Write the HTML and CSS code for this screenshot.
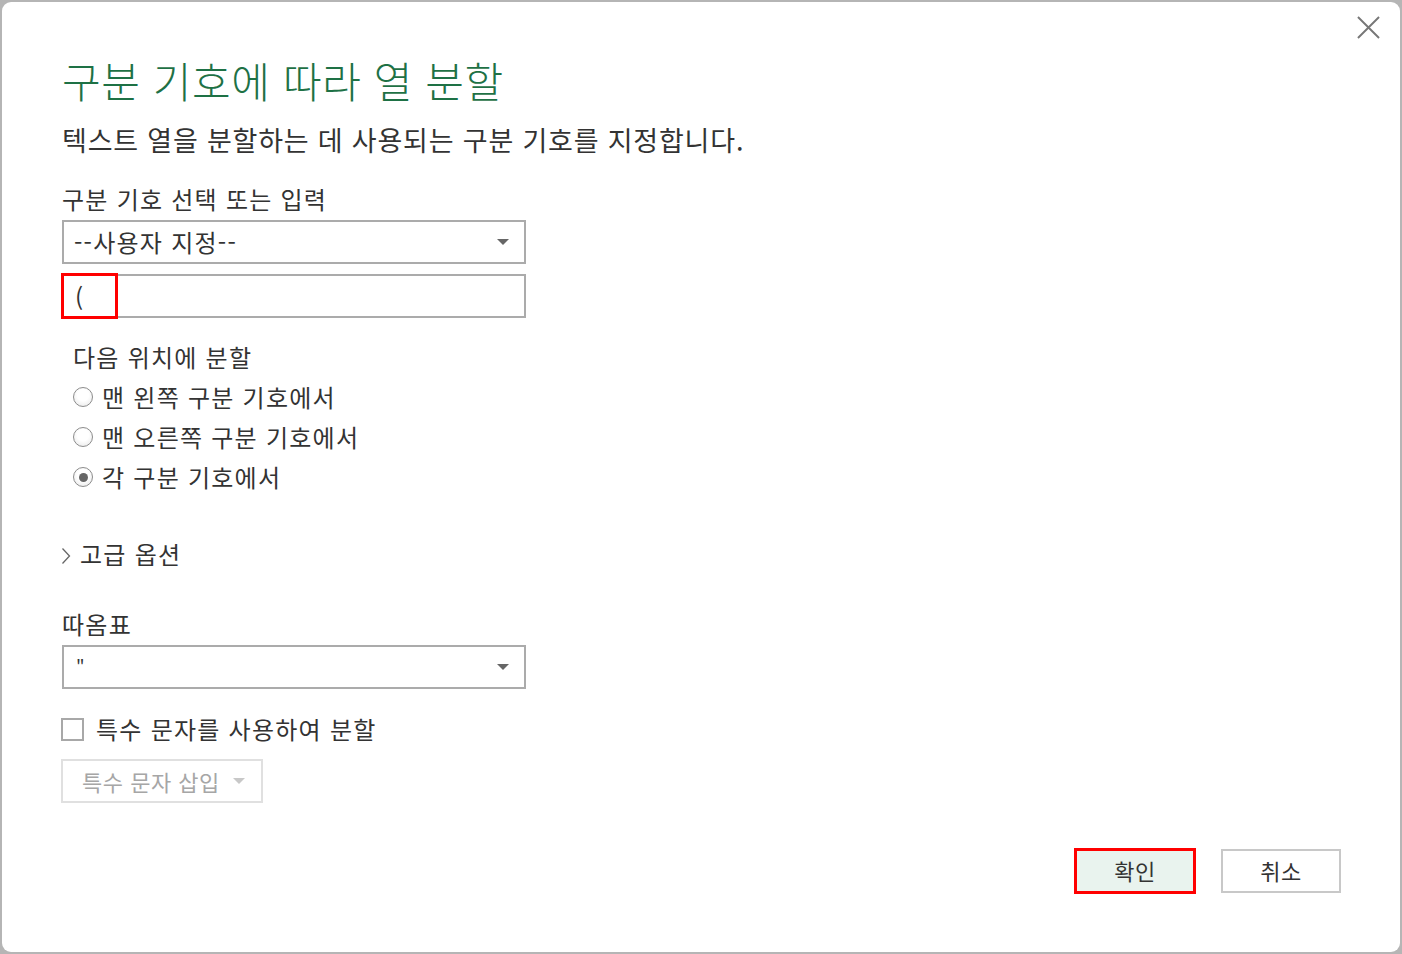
FILE: index.html
```html
<!DOCTYPE html>
<html lang="ko">
<head>
<meta charset="utf-8">
<title>구분 기호에 따라 열 분할</title>
<link rel="stylesheet" href="styles.css">
</head>
<body>
<div class="dialog">
  <button class="close" aria-label="닫기">
    <svg width="24" height="24" viewBox="0 0 24 24"><path d="M1 1 L23 23 M23 1 L1 23" stroke="#777" stroke-width="2" fill="none"/></svg>
  </button>
  <h1 class="title">구분 기호에 따라 열 분할</h1>
  <p class="subtitle">텍스트 열을 분할하는 데 사용되는 구분 기호를 지정합니다.</p>

  <div class="label first-label">구분 기호 선택 또는 입력</div>
  <div class="select">
    <span class="select-text">--사용자 지정--</span>
    <span class="arrow"></span>
  </div>
  <div class="input-wrap">
    <div class="input"><span class="input-text">(</span></div>
    <div class="highlight"></div>
  </div>

  <div class="radio-group">
    <div class="radio-heading">다음 위치에 분할</div>
    <div class="radio-row"><span class="radio"></span><span>맨 왼쪽 구분 기호에서</span></div>
    <div class="radio-row"><span class="radio"></span><span>맨 오른쪽 구분 기호에서</span></div>
    <div class="radio-row"><span class="radio checked"></span><span>각 구분 기호에서</span></div>
  </div>

  <div class="advanced">
    <svg class="chevron" width="10" height="18" viewBox="0 0 10 18"><path d="M1.5 1.5 L8.5 9 L1.5 16.5" stroke="#666" stroke-width="1.3" fill="none"/></svg>
    <span>고급 옵션</span>
  </div>

  <div class="label quote-label">따옴표</div>
  <div class="select">
    <span class="select-text quote">"</span>
    <span class="arrow"></span>
  </div>

  <div class="check-row">
    <span class="checkbox"></span>
    <span class="check-text">특수 문자를 사용하여 분할</span>
  </div>

  <div class="insert-btn">
    <span>특수 문자 삽입</span>
    <span class="arrow light"></span>
  </div>

  <div class="footer">
    <button class="btn primary">확인</button>
    <button class="btn">취소</button>
  </div>
</div>
</body>
</html>
```

FILE: styles.css
```css
* { box-sizing: border-box; }

html, body {
  margin: 0;
  padding: 0;
  height: 954px;
  overflow: hidden;
}

body {
  background: #b5b5b5;
  font-family: "Noto Sans CJK KR", "Noto Sans", sans-serif;
  color: #333;
  padding: 2px;
}

.dialog {
  position: relative;
  width: 1398px;
  height: 950px;
  background: #fff;
  border-radius: 9px;
  padding: 0 59px 59px 60px;
  display: flex;
  flex-direction: column;
  align-items: flex-start;
  font-size: 24px;
  letter-spacing: 1.25px;
}

.close {
  position: absolute;
  top: 13px;
  right: 19px;
  width: 25px;
  height: 25px;
  padding: 1px;
  border: none;
  background: transparent;
  display: flex;
}

.close svg { width: 23px; height: 23px; }

.title {
  margin: 54px 0 0 0;
  font-size: 42px;
  line-height: 48px;
  font-weight: 300;
  color: #1e7145;
  letter-spacing: 0.6px;
}

.subtitle {
  margin: 19px 0 0 0;
  font-size: 27px;
  line-height: 34px;
  font-weight: 400;
  letter-spacing: 0.8px;
}

.label {
  line-height: 30px;
}

.first-label { margin-top: 27px; }

.select {
  position: relative;
  width: 464px;
  height: 44px;
  border: 2px solid #ababab;
  margin-top: 6px;
  display: flex;
  align-items: center;
  padding-left: 10px;
}

.select-text { line-height: 30px; }

.select-text.quote { font-size: 18px; padding-left: 2px; }

.arrow {
  margin-left: auto;
  margin-right: 15px;
  width: 0;
  height: 0;
  border-left: 6px solid transparent;
  border-right: 6px solid transparent;
  border-top: 6px solid #666;
}

.arrow.light {
  border-top-color: #c8c8c8;
  margin-right: 16px;
}

.input-wrap {
  position: relative;
  margin-top: 10px;
}

.input {
  width: 464px;
  height: 44px;
  border: 2px solid #ababab;
  display: flex;
  align-items: center;
  padding-left: 11px;
}

.highlight {
  position: absolute;
  left: -1px;
  top: -1px;
  width: 57px;
  height: 46px;
  border: 3px solid #f00;
}

.radio-group {
  margin-top: 19px;
  padding-left: 11px;
}

.radio-heading,
.radio-row {
  height: 40px;
  line-height: 40px;
  display: flex;
  align-items: center;
}

.radio {
  width: 20px;
  height: 20px;
  border-radius: 50%;
  border: 1.5px solid #8c8c8c;
  background: radial-gradient(circle at 50% 40%, #fff 40%, #e4e4e4 100%);
  margin-right: 9px;
  display: flex;
  align-items: center;
  justify-content: center;
}

.radio.checked::after {
  content: "";
  width: 9px;
  height: 9px;
  border-radius: 50%;
  background: #666;
}

.advanced {
  margin-top: 36px;
  height: 40px;
  display: flex;
  align-items: center;
  gap: 9px;
  margin-left: -1px;
}

.chevron { margin-top: 5px; }

.quote-label { margin-top: 36px; }

.check-row {
  margin-top: 25px;
  height: 30px;
  display: flex;
  align-items: center;
}

.check-text { position: relative; top: -1px; }

.checkbox {
  width: 23px;
  height: 23px;
  border: 2px solid #a8a8a8;
  margin-left: -1px;
  margin-right: 12px;
  background: #fff;
}

.insert-btn {
  margin-top: 15px;
  width: 202px;
  height: 44px;
  border: 2px solid #e0e0e0;
  display: flex;
  align-items: center;
  padding-left: 19px;
  font-size: 22px;
  letter-spacing: 0.5px;
  color: #a6a6a6;
  margin-left: -1px;
}

.footer {
  margin-top: auto;
  align-self: stretch;
  display: flex;
  justify-content: flex-end;
  gap: 26px;
}

.btn {
  width: 120px;
  height: 44px;
  border: 2px solid #c8c8c8;
  background: #fff;
  font-family: "Noto Sans CJK KR", "Noto Sans", sans-serif;
  font-size: 22px;
  letter-spacing: 0.5px;
  color: #333;
  padding: 0 0 2px 0;
}

.btn.primary {
  background: #e9f3ee;
  outline: 3px solid #f00;
  outline-offset: -2px;
}
```
